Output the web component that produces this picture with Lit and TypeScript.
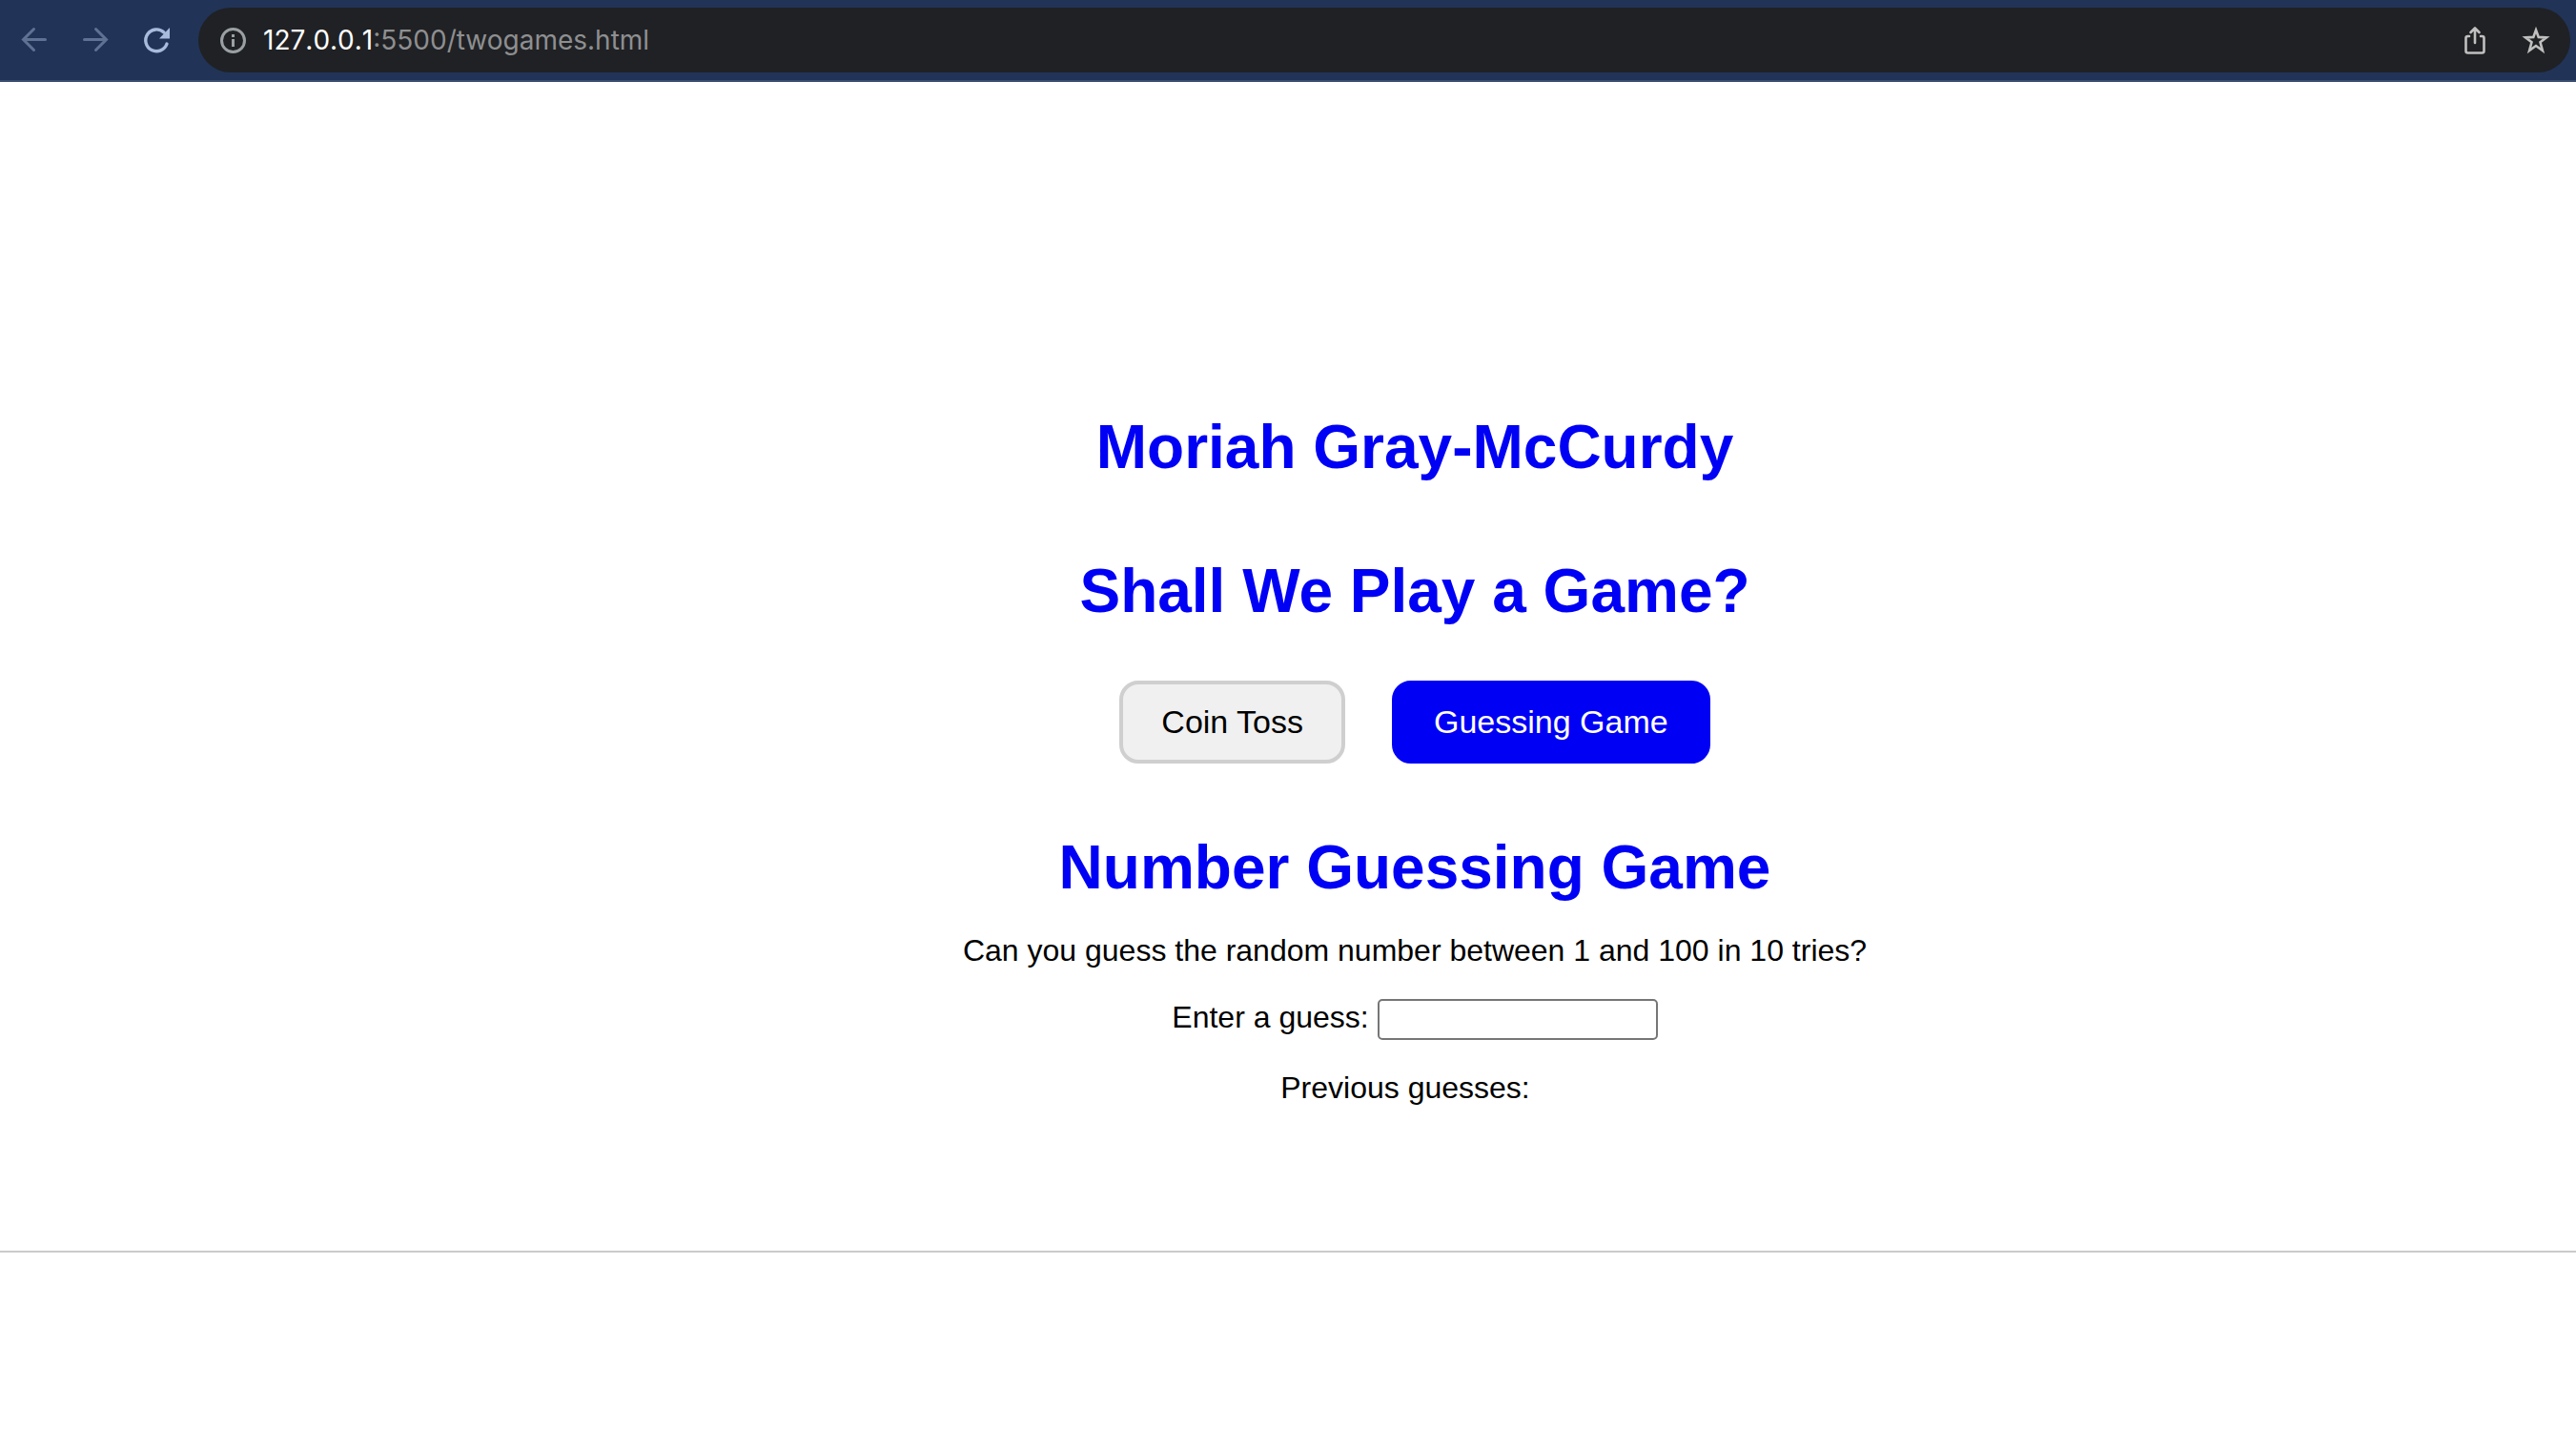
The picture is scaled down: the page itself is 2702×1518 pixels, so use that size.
import { LitElement, html, css, svg, nothing } from "lit";
import { customElement, state } from "lit/decorators.js";

@customElement("browser-bar")
class BrowserBar extends LitElement {
  static styles = css`
    :host {
      display: block;
    }
    .bar {
      box-sizing: border-box;
      display: flex;
      align-items: center;
      height: 86px;
      padding: 0 6px 0 4px;
      background: #213357;
      border-bottom: 2px solid #3b4d70;
    }
    .tool {
      display: flex;
      align-items: center;
      justify-content: center;
      width: 64px;
      height: 64px;
      padding: 0;
      border: 0;
      background: none;
      color: #a8bbdd;
    }
    .tool:disabled {
      color: #5f7294;
    }
    .nav {
      display: flex;
      width: 204px;
      flex: none;
    }
    .address {
      flex: 1;
      min-width: 0;
      display: flex;
      align-items: center;
      height: 68px;
      padding: 0 4px 0 20px;
      border-radius: 34px;
      background: #202124;
    }
    .site {
      width: 32px;
      color: #9aa0a3;
    }
    .url {
      flex: 1;
      margin-left: 16px;
      color: #8e8f91;
      font: 28px/36px Inter, "Liberation Sans", sans-serif;
      text-decoration: none;
      white-space: nowrap;
    }
    .host {
      color: #fff;
      font-kerning: none;
    }
    .address .action {
      color: #c0c0c0;
    }
    svg {
      display: block;
      width: 32px;
      height: 32px;
      fill: none;
      stroke: currentColor;
    }
    .solid {
      fill: currentColor;
      stroke: none;
    }
  `;

  render() {
    return html`
      <div class="bar">
        <div class="nav">
          <button class="tool" disabled aria-label="Back">
            <svg viewBox="0 0 32 32" stroke-width="3" stroke-linecap="round">
              ${svg`<path d="M27.500 15.500H5M15.500 4.500 4.500 15.500 15.500 26.500"/>`}
            </svg>
          </button>
          <button class="tool" disabled aria-label="Forward">
            <svg viewBox="0 0 32 32" stroke-width="3" stroke-linecap="round">
              ${svg`<path d="M4.500 15.500h23M16.500 4.500 27.500 15.500 16.500 26.500"/>`}
            </svg>
          </button>
          <button class="tool" aria-label="Reload">
            <svg viewBox="0 0 32 32" stroke-width="3.400" stroke-linecap="round">
              ${svg`<path d="M24 8A11.400 11.400 0 1 0 27 20"/><path class="solid" d="M30 3v11.500H19z"/>`}
            </svg>
          </button>
        </div>
        <div class="address">
          <button class="tool site" aria-label="Site information">
            <svg viewBox="0 0 32 32" stroke-width="3">
              ${svg`<circle cx="16.500" cy="16.500" r="12"/><path d="M16.500 15v8M16.500 10v3"/>`}
            </svg>
          </button>
          <a class="url" href="#"><span class="host">127.0.0.1</span>:5500/twogames.html</a>
          <button class="tool action" aria-label="Share">
            <svg viewBox="0 0 32 32" stroke-width="2.600" stroke-linecap="round" stroke-linejoin="round">
              ${svg`<path d="M10 12H8.500a2 2 0 0 0-2 2v13.500a2 2 0 0 0 2 2h15a2 2 0 0 0 2-2V14a2 2 0 0 0-2-2H22M16 19V4M11.500 8 16 3.500 20.500 8"/>`}
            </svg>
          </button>
          <button class="tool action" aria-label="Bookmark this page">
            <svg viewBox="0 0 32 32" stroke-width="2.600">
              ${svg`<path d="M16 5.500 18.700 12.900 27 13.400 20.500 18.300 22.900 27 16 22 9.100 27 11.500 18.300 5 13.400 13.300 12.900Z"/>`}
            </svg>
          </button>
        </div>
      </div>
    `;
  }
}

@customElement("app-root")
class AppRoot extends LitElement {
  static styles = css`
    :host {
      display: block;
      min-height: 100vh;
      background: #fff;
      color: #000;
      font: 32px/36px "Liberation Sans", Arial, sans-serif;
    }
    .page {
      display: flex;
      flex-direction: column;
      align-items: center;
      padding: 346px 0 153px 266px;
      border-bottom: 2px solid #cbcbcb;
      text-align: center;
    }
    .title {
      margin: 0;
      color: #0000f5;
      font-size: 64px;
      line-height: 74px;
      font-weight: bold;
    }
    .question {
      margin-top: 77px;
    }
    .games {
      display: flex;
      gap: 49px;
      margin: 57px 0 72px;
    }
    .game {
      padding: 20px 40px;
      border: 4px solid #cfcfcf;
      border-radius: 20px;
      background: #f0f0f0;
      color: #000;
      font: 34px/39px "Liberation Sans", Arial, sans-serif;
    }
    .game.active {
      border-color: #0000f5;
      background: #0000f5;
      color: #fff;
    }
    .intro {
      margin: 32px 0 0;
    }
    .guess {
      display: flex;
      align-items: baseline;
      gap: 9px;
      margin: 33px 0 0;
    }
    .field {
      box-sizing: border-box;
      width: 294px;
      height: 43px;
      padding: 2px 4px;
      border: 2px solid #767676;
      border-radius: 5px;
      background: #fff;
      font: 27px/35px "Liberation Sans", Arial, sans-serif;
    }
    .previous {
      margin: 32px 0 0;
      padding-right: 20px;
    }
  `;

  @state() private game = "guessing";
  @state() private guesses: string[] = [];

  private submit(e: Event) {
    e.preventDefault();
    const field = (e.target as HTMLFormElement).elements.namedItem("guess") as HTMLInputElement;
    if (field.value && this.guesses.length < 10) {
      this.guesses = [...this.guesses, field.value];
    }
    field.value = "";
  }

  private gameButton(id: string, label: string) {
    return html`<button
      class="game ${this.game === id ? "active" : ""}"
      @click=${() => (this.game = id)}
    >${label}</button>`;
  }

  render() {
    return html`
      <browser-bar></browser-bar>
      <main class="page">
        <h1 class="title">Moriah Gray-McCurdy</h1>
        <h1 class="title question">Shall We Play a Game?</h1>
        <div class="games">
          ${this.gameButton("coin", "Coin Toss")}${this.gameButton("guessing", "Guessing Game")}
        </div>
        ${this.game === "guessing"
          ? html`
              <h2 class="title">Number Guessing Game</h2>
              <p class="intro">Can you guess the random number between 1 and 100 in 10 tries?</p>
              <form class="guess" @submit=${this.submit}>
                <label for="guess">Enter a guess:</label>
                <input class="field" id="guess" name="guess" type="text" autocomplete="off" />
              </form>
              <p class="previous">Previous guesses: ${this.guesses.join(", ")}</p>
            `
          : nothing}
      </main>
    `;
  }
}
